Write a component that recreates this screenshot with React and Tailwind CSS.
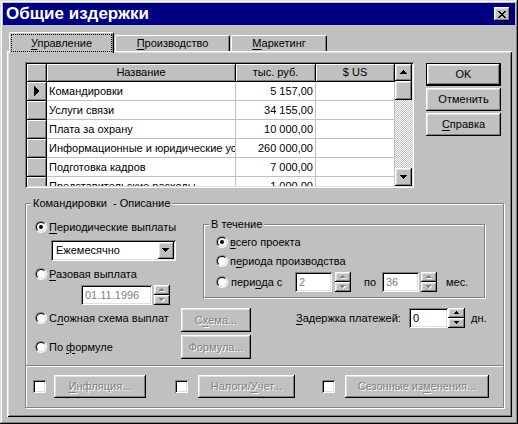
import React from 'react';

// win95 bevels
const raised = 'shadow-[inset_-1px_-1px_0_#000,inset_1px_1px_0_#fff,inset_-2px_-2px_0_#808080,inset_2px_2px_0_#dfdfdf]';
const sunken = 'shadow-[inset_1px_1px_0_#808080,inset_-1px_-1px_0_#fff,inset_2px_2px_0_#000,inset_-2px_-2px_0_#dfdfdf]';
const etched = 'border border-[#808080] shadow-[inset_1px_1px_0_#fff,1px_1px_0_#fff]';
const fixedCell = 'bg-[#c0c0c0] border-r border-b border-black shadow-[inset_1px_1px_0_#fff,inset_-1px_-1px_0_#808080]';
const dim = 'text-[#808080] [text-shadow:1px_1px_0_#fff]';

const rows = [
  ['Командировки', '5 157,00'],
  ['Услуги связи', '34 155,00'],
  ['Плата за охрану', '10 000,00'],
  ['Информационные и юридические услуги', '260 000,00'],
  ['Подготовка кадров', '7 000,00'],
  ['Представительские расходы', '1 000,00'],
];

const U = ({ children }) => <span className="underline underline-offset-[2px]">{children}</span>;

function Arrow({ dir, disabled, w = 7, h = 4 }) {
  const pts = {
    up: `0,${h} ${w / 2},0 ${w},${h}`,
    down: `0,0 ${w},0 ${w / 2},${h}`,
    right: `0,0 ${w},${h / 2} 0,${h}`,
  }[dir];
  return (
    <svg width={w + 1} height={h + 1} viewBox={`0 0 ${w + 1} ${h + 1}`} shapeRendering="crispEdges">
      {disabled && <polygon points={pts} fill="#fff" transform="translate(1 1)" />}
      <polygon points={pts} fill={disabled ? '#808080' : '#000'} />
    </svg>
  );
}

function Btn({ children, className = '', disabled, def }) {
  const inner = (
    <div className={`flex h-full w-full items-center justify-center bg-[#c0c0c0] ${raised} ${disabled ? dim : ''}`}>
      {children}
    </div>
  );
  if (def) return <div className={`border border-black ${className}`}>{inner}</div>;
  return <div className={className}>{inner}</div>;
}

function Spin({ disabled, className = '' }) {
  return (
    <div className={`flex flex-col ${className}`}>
      <div className={`flex flex-1 items-center justify-center bg-[#c0c0c0] ${raised}`}>
        <Arrow dir="up" w={5} h={3} disabled={disabled} />
      </div>
      <div className={`flex flex-1 items-center justify-center bg-[#c0c0c0] ${raised}`}>
        <Arrow dir="down" w={5} h={3} disabled={disabled} />
      </div>
    </div>
  );
}

function Field({ value, disabled, className = '' }) {
  return (
    <div className={`flex items-center bg-white pl-[4px] ${sunken} ${disabled ? 'text-[#808080]' : ''} ${className}`}>
      {value}
    </div>
  );
}

function Radio({ checked }) {
  return (
    <span className="inline-flex size-[12px] shrink-0 rounded-full border border-t-[#808080] border-l-[#808080] border-b-white border-r-white">
      <span className="flex size-full items-center justify-center rounded-full border border-t-black border-l-black border-b-[#dfdfdf] border-r-[#dfdfdf] bg-white">
        {checked && <span className="size-[4px] rounded-full bg-black" />}
      </span>
    </span>
  );
}

const Check = ({ className = '' }) => <span className={`block size-[13px] shrink-0 bg-white ${sunken} ${className}`} />;

function Grid() {
  return (
    <div className={`flex h-[126px] w-[389px] p-[2px] ${sunken}`}>
      <div className="h-[122px] w-[368px] overflow-hidden bg-white">
        <div className="flex h-[18px]">
          <div className={`w-[20px] ${fixedCell}`} />
          <div className={`flex w-[189px] items-center justify-center ${fixedCell}`}>Название</div>
          <div className={`flex w-[80px] items-center justify-center ${fixedCell}`}>тыс. руб.</div>
          <div className={`flex w-[79px] items-center justify-center ${fixedCell}`}>$ US</div>
        </div>
        {rows.map(([name, rub], i) => (
          <div key={name} className="flex h-[19px]">
            <div className={`flex w-[20px] items-center justify-center ${fixedCell}`}>
              {i === 0 && <Arrow dir="right" w={5} h={10} />}
            </div>
            <div className="flex w-[189px] items-center overflow-hidden whitespace-nowrap border-r border-b border-[#c0c0c0] pl-[2px]">
              {name}
            </div>
            <div className="flex w-[80px] items-center justify-end border-r border-b border-[#c0c0c0] pr-[2px]">{rub}</div>
            <div className="w-[79px] border-r border-b border-[#c0c0c0]" />
          </div>
        ))}
      </div>
      <div className="flex h-[122px] w-[17px] flex-col">
        <div className={`flex h-[17px] items-center justify-center bg-[#c0c0c0] ${raised}`}>
          <Arrow dir="up" />
        </div>
        <div className={`h-[19px] bg-[#c0c0c0] ${raised}`} />
        <div className="flex-1 [background-image:repeating-conic-gradient(#fff_0_25%,#c0c0c0_0_50%)] [background-size:2px_2px]" />
        <div className={`flex h-[18px] items-center justify-center bg-[#c0c0c0] ${raised}`}>
          <Arrow dir="down" />
        </div>
      </div>
    </div>
  );
}

function Description() {
  return (
    <div className={`relative mt-[15px] w-[479px] ${etched}`}>
      <span className="absolute left-[5px] top-[-7px] whitespace-pre bg-[#c0c0c0] px-[2px]">Командировки  - Описание</span>

      <div className="flex flex-col pb-[6px] pl-[9px] pt-[16px]">
        <div className="flex">
          <div className="flex w-[168px] flex-col">
            <div className="flex h-[14px] items-center gap-[2px]">
              <Radio checked />
              <span><U>П</U>ериодические выплаты</span>
            </div>
            <div className={`ml-[16px] mt-[6px] flex h-[21px] w-[125px] bg-white p-[2px] ${sunken}`}>
              <div className="flex flex-1 items-center pl-[3px]">Ежемесячно</div>
              <div className={`flex w-[16px] items-center justify-center bg-[#c0c0c0] ${raised}`}>
                <Arrow dir="down" />
              </div>
            </div>
            <div className="mt-[6px] flex h-[14px] items-center gap-[2px]">
              <Radio />
              <span><U>Р</U>азовая выплата</span>
            </div>
            <div className="ml-[46px] mt-[4px] flex h-[20px]">
              <Field value="01.11.1996" disabled className="w-[71px]" />
              <Spin disabled className="ml-[2px] w-[16px]" />
            </div>
          </div>

          <div className={`relative mt-[4px] h-[74px] w-[282px] ${etched}`}>
            <span className="absolute left-[5px] top-[-7px] bg-[#c0c0c0] px-[2px]">В течение</span>
            <div className="flex flex-col pl-[12px] pt-[10px]">
              <div className="flex h-[14px] items-center gap-[2px]">
                <Radio checked />
                <span><U>в</U>сего проекта</span>
              </div>
              <div className="mt-[5px] flex h-[14px] items-center gap-[2px]">
                <Radio />
                <span>п<U>е</U>риода производства</span>
              </div>
              <div className="mt-[4px] flex h-[20px] items-center">
                <div className="flex w-[79px] items-center gap-[3px]">
                  <Radio />
                  <span>пери<U>о</U>да с</span>
                </div>
                <Field value="2" disabled className="h-[20px] w-[37px]" />
                <Spin disabled className="ml-[3px] h-[20px] w-[16px]" />
                <span className="w-[31px] pl-[13px]">по</span>
                <Field value="36" disabled className="h-[20px] w-[37px]" />
                <Spin disabled className="ml-[2px] h-[20px] w-[16px]" />
                <span className="ml-[9px]">мес.</span>
              </div>
            </div>
          </div>
        </div>

        <div className="mt-[3px] flex items-start">
          <div className="flex h-[20px] w-[146px] items-center gap-[2px]">
            <Radio />
            <span>С<U>л</U>ожная схема выплат</span>
          </div>
          <Btn disabled className="h-[24px] w-[70px]">С<U>х</U>ема...</Btn>
          <div className="ml-[45px] flex h-[20px] w-[113px] items-center">
            <span><U>З</U>адержка платежей:</span>
          </div>
          <Field value="0" className="h-[20px] w-[39px]" />
          <Spin className="h-[20px] w-[17px]" />
          <span className="ml-[6px] flex h-[20px] items-center">дн.</span>
        </div>

        <div className="mt-[3px] flex items-start">
          <div className="flex h-[24px] w-[146px] items-center gap-[2px]">
            <Radio />
            <span>По <U>ф</U>ормуле</span>
          </div>
          <Btn disabled className="h-[24px] w-[70px]">Формула...</Btn>
        </div>
      </div>

      <div className="h-[2px] border-t border-[#808080] bg-white" />

      <div className="flex h-[40px] items-center pb-[1px] pl-[7px]">
        <Check />
        <Btn disabled className="ml-[8px] h-[23px] w-[92px]"><U>И</U>нфляция...</Btn>
        <Check className="ml-[29px]" />
        <Btn disabled className="ml-[10px] h-[23px] w-[97px]">Налоги/<U>У</U>чет...</Btn>
        <Check className="ml-[27px]" />
        <Btn disabled className="ml-[10px] h-[23px] w-[144px]">Сезонные из<U>м</U>енения...</Btn>
      </div>
    </div>
  );
}

export default function App() {
  return (
    <div className="h-[424px] w-[518px] bg-[#c0c0c0] p-[3px] text-[11px] leading-[13px] text-black [font-family:'Liberation_Sans',Arial,sans-serif] shadow-[inset_-1px_-1px_0_#000,inset_1px_1px_0_#dfdfdf,inset_-2px_-2px_0_#808080,inset_2px_2px_0_#fff]">
      {/* title bar */}
      <div className="flex h-[22px] items-center justify-between bg-[#000080] pl-[3px] pr-[5px]">
        <span className="text-[17px] font-bold leading-[20px] text-white">Общие издержки</span>
        <div className={`flex h-[14px] w-[16px] items-center justify-center bg-[#c0c0c0] ${raised}`}>
          <svg width="8" height="7" viewBox="0 0 8 7" shapeRendering="crispEdges">
            <path d="M0 0h2v1h-2zM6 0h2v1h-2zM1 1h2v1h-2zM5 1h2v1h-2zM2 2h4v1h-4zM3 3h2v1h-2zM2 4h4v1h-4zM1 5h2v1h-2zM5 5h2v1h-2zM0 6h2v1h-2zM6 6h2v1h-2z" fill="#000" />
          </svg>
        </div>
      </div>

      {/* tabs */}
      <div className="ml-[6px] mt-[7px] flex h-[19px] items-end">
        <div className="relative z-10 -mb-[2px] flex h-[21px] w-[105px] rounded-t-[2px] border-l border-r border-t border-l-white border-t-white border-r-black bg-[#c0c0c0] px-[1px] pt-[1px] shadow-[inset_-1px_0_0_#808080]">
          <div className="flex h-[18px] w-[101px] items-center justify-center border border-dotted border-black">
            <span><U>У</U>правление</span>
          </div>
        </div>
        <div className="ml-[1px] flex h-[16px] w-[115px] items-center justify-center rounded-t-[2px] border-l border-r border-t border-l-white border-t-white border-r-black shadow-[inset_-1px_0_0_#808080]">
          <span><U>П</U>роизводство</span>
        </div>
        <div className="ml-[1px] flex h-[16px] w-[96px] items-center justify-center rounded-t-[2px] border-l border-r border-t border-l-white border-t-white border-r-black shadow-[inset_-1px_0_0_#808080]">
          <span><U>М</U>аркетинг</span>
        </div>
      </div>

      {/* tab page */}
      <div className="ml-[4px] flex h-[366px] w-[505px] flex-col pl-[18px] pt-[11px] shadow-[inset_1px_1px_0_#fff,inset_-1px_-1px_0_#000,inset_2px_2px_0_#dfdfdf,inset_-2px_-2px_0_#808080]">
        <div className="flex items-start">
          <Grid />
          <div className="ml-[12px] mt-[1px] flex w-[75px] flex-col gap-[2px]">
            <Btn def className="h-[23px]">OK</Btn>
            <Btn className="h-[23px]">Отменить</Btn>
            <Btn className="h-[23px]"><U>С</U>правка</Btn>
          </div>
        </div>
        <Description />
      </div>
    </div>
  );
}
